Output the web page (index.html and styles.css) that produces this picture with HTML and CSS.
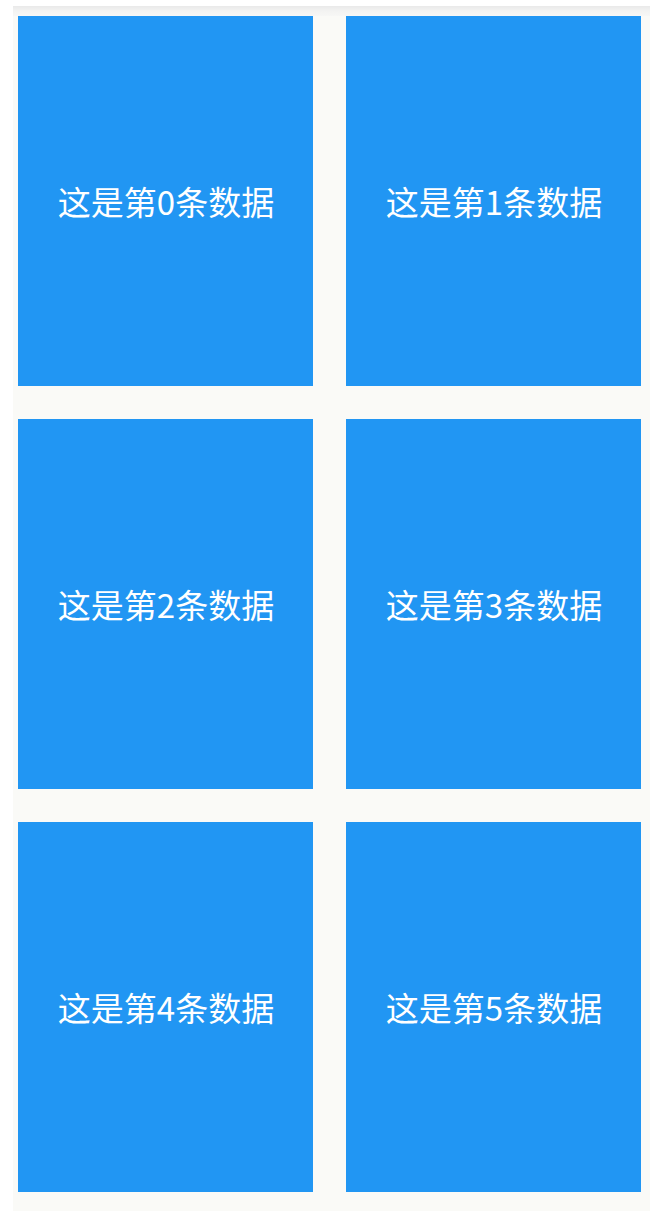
FILE: index.html
```html
<!DOCTYPE html>
<html>
<head>
<meta charset="utf-8">
<link rel="stylesheet" href="styles.css">
</head>
<body>
<div class="page">
  <div class="grid">
    <div class="tile">这是第0条数据</div>
    <div class="tile">这是第1条数据</div>
    <div class="tile">这是第2条数据</div>
    <div class="tile">这是第3条数据</div>
    <div class="tile">这是第4条数据</div>
    <div class="tile">这是第5条数据</div>
  </div>
</div>
</body>
</html>
```
FILE: styles.css
```css
html, body {
  margin: 0;
  padding: 0;
  background: #ffffff;
}
.page {
  margin: 6px 0 0 13px;
  width: 637px;
  min-height: 1205px;
  box-sizing: border-box;
  padding: 10px 9px 0 5px;
  background: linear-gradient(to bottom, #e9e9e9 0, #f3f3f2 5px, #f7f7f5 10px, #fafaf7 10px);
}
.grid {
  display: grid;
  grid-template-columns: 295px 295px;
  grid-auto-rows: 370px;
  column-gap: 33px;
  row-gap: 33px;
}
.tile {
  background: #2196f3;
  color: #ffffff;
  display: flex;
  align-items: center;
  justify-content: center;
  font-family: "Noto Sans CJK SC", "Noto Sans", sans-serif;
  font-size: 33px;
  line-height: 1;
  padding-left: 1px;
}
```
